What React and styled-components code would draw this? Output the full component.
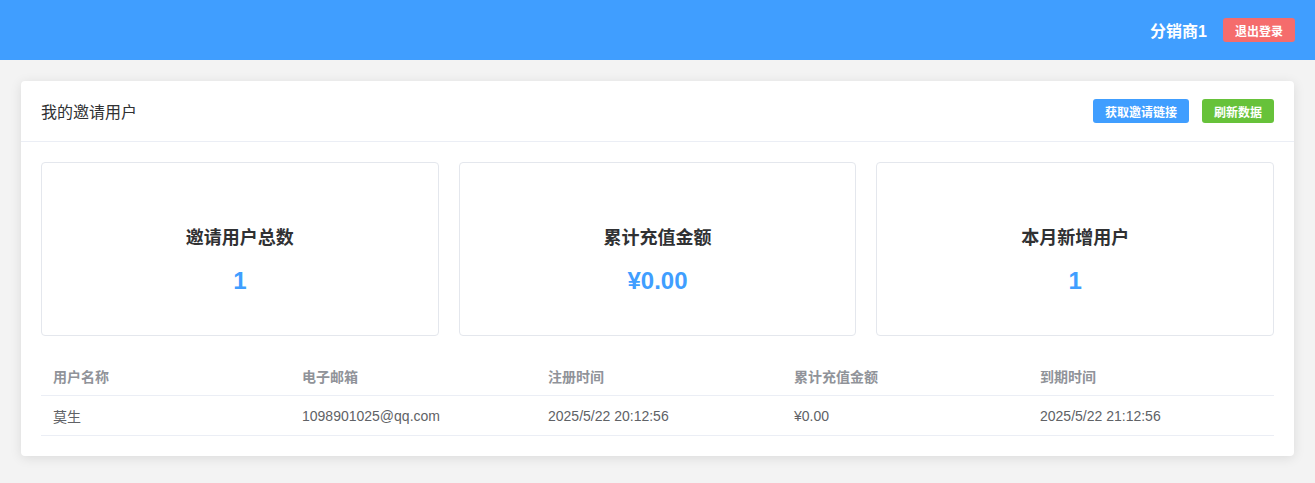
import React from "react";
import styled, { createGlobalStyle } from "styled-components";

const GlobalStyle = createGlobalStyle`
  body {
    margin: 0;
    background: #f3f3f3;
    font-family: "Liberation Sans", "Noto Sans CJK SC", sans-serif;
    color: #303133;
  }
`;

const Header = styled.header`
  height: 60px;
  background: #409eff;
  display: flex;
  align-items: center;
  justify-content: flex-end;
  padding: 0 20px;
`;
const UserName = styled.span`
  color: #fff;
  font-size: 16px;
  font-weight: bold;
  margin-right: 16px;
`;
const Button = styled.button`
  border: none;
  border-radius: 3px;
  height: 24px;
  padding: 0 12px;
  font-family: inherit;
  font-size: 12px;
  font-weight: bold;
  color: #fff;
  background: ${p => p.color};
  margin-left: ${p => p.gap || 0}px;
  cursor: pointer;
`;
const Main = styled.main`
  padding: 21px 21px;
`;
const Card = styled.section`
  background: #fff;
  border-radius: 4px;
  box-shadow: 0 2px 12px 0 rgba(0, 0, 0, 0.1);
`;
const CardHeader = styled.div`
  height: 61px;
  box-sizing: border-box;
  border-bottom: 1px solid #ebeef5;
  padding: 0 20px;
  display: flex;
  align-items: center;
  justify-content: space-between;
`;
const CardTitle = styled.span`
  font-size: 16px;
`;
const CardBody = styled.div`
  padding: 20px 20px 20px;
`;
const Stats = styled.div`
  display: grid;
  grid-template-columns: repeat(3, 1fr);
  gap: 20px;
`;
const StatCard = styled.div`
  height: 174px;
  box-sizing: border-box;
  border: 1px solid #e4e7ed;
  border-radius: 4px;
  padding-top: 63px;
  text-align: center;
`;
const StatTitle = styled.div`
  font-size: 18px;
  font-weight: bold;
  line-height: 24px;
  color: #303133;
`;
const StatValue = styled.div`
  margin-top: 16px;
  font-size: 24px;
  font-weight: bold;
  line-height: 30px;
  color: #409eff;
`;
const Table = styled.div`
  margin-top: 20px;
  font-size: 14px;
`;
const Row = styled.div`
  display: grid;
  grid-template-columns: 249px 246px 246px 246px 1fr;
  height: 39px;
  align-items: center;
  border-bottom: 1px solid #ebeef5;
  color: ${p => (p.head ? "#909399" : "#606266")};
  font-weight: ${p => (p.head ? "bold" : "normal")};
`;
const Cell = styled.div`
  padding-left: 12px;
`;

const stats = [
  { title: "邀请用户总数", value: "1" },
  { title: "累计充值金额", value: "¥0.00" },
  { title: "本月新增用户", value: "1" }
];
const columns = ["用户名称", "电子邮箱", "注册时间", "累计充值金额", "到期时间"];
const users = [
  ["莫生", "1098901025@qq.com", "2025/5/22 20:12:56", "¥0.00", "2025/5/22 21:12:56"]
];

export default function App() {
  return (
    <>
      <GlobalStyle />
      <Header>
        <UserName>分销商1</UserName>
        <Button color="#f56c6c">退出登录</Button>
      </Header>
      <Main>
        <Card>
          <CardHeader>
            <CardTitle>我的邀请用户</CardTitle>
            <div>
              <Button color="#409eff">获取邀请链接</Button>
              <Button color="#67c23a" gap={13}>刷新数据</Button>
            </div>
          </CardHeader>
          <CardBody>
            <Stats>
              {stats.map(s => (
                <StatCard key={s.title}>
                  <StatTitle>{s.title}</StatTitle>
                  <StatValue>{s.value}</StatValue>
                </StatCard>
              ))}
            </Stats>
            <Table>
              <Row head>
                {columns.map(c => <Cell key={c}>{c}</Cell>)}
              </Row>
              {users.map(u => (
                <Row key={u[1]}>
                  {u.map((v, i) => <Cell key={i}>{v}</Cell>)}
                </Row>
              ))}
            </Table>
          </CardBody>
        </Card>
      </Main>
    </>
  );
}
